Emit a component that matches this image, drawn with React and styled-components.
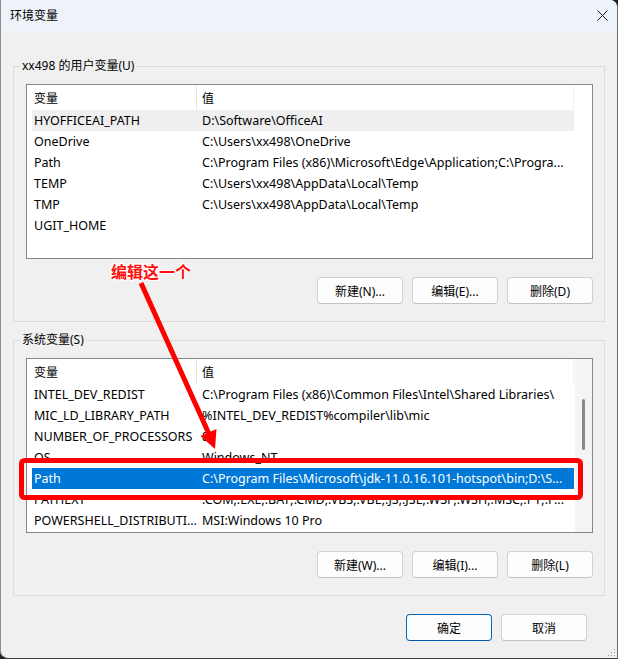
import React from "react";
import styled, { createGlobalStyle } from "styled-components";

const GlobalStyle = createGlobalStyle`
  html, body {
    margin: 0;
    padding: 0;
    background: #1d1f22;
  }
  body {
    font-family: "Noto Sans", "Noto Sans CJK SC", sans-serif;
  }
`;

const Window = styled.div`
  position: relative;
  width: 618px;
  height: 659px;
  box-sizing: border-box;
  display: flex;
  flex-direction: column;
  background: #f0f0f0;
  border-left: 1px solid #8d8d8d;
  border-right: 1px solid #6f6f6f;
  border-bottom: 1px solid #3c3c3c;
  border-radius: 0 8px 0 8px;
  overflow: hidden;
  font-size: 12px;
  color: #000;
`;

const TitleBar = styled.div`
  height: 31px;
  flex-shrink: 0;
  display: flex;
  align-items: center;
  justify-content: space-between;
  padding-left: 9px;
  background: #eef3fa;
`;

const Title = styled.span`
  font-size: 12px;
  line-height: 16px;
`;

const CloseButton = styled.div`
  width: 30px;
  height: 31px;
  display: flex;
  align-items: center;
  justify-content: center;
`;

const Content = styled.div`
  display: flex;
  flex-direction: column;
  gap: 18px;
  padding: 35px 12px 0 12px;
`;

const Group = styled.div`
  position: relative;
  border: 1px solid #dcdcdc;
  padding: 17px 11px 17px 12px;
`;

const Caption = styled.span`
  position: absolute;
  top: -9px;
  left: 6px;
  padding: 0 2px;
  line-height: 16px;
  background: #f0f0f0;
`;

const ListView = styled.div`
  height: 175px;
  box-sizing: border-box;
  border: 1px solid #828790;
  background: #fff;
  display: grid;
  grid-template-columns: 547px 1fr 17px;
  overflow: hidden;
`;

const Columns = styled.div`
  display: flex;
  flex-direction: column;
`;

const Header = styled.div`
  height: 25px;
  display: grid;
  grid-template-columns: 169px 378px;
  align-items: stretch;
  flex-shrink: 0;
`;

const HeaderCell = styled.div`
  display: flex;
  align-items: center;
  padding-left: ${(p) => (p.$value ? "5px" : "7px")};
  border-left: ${(p) => (p.$value ? "1px solid #e5e5e5" : "none")};
  border-right: ${(p) => (p.$value ? "1px solid #efefef" : "none")};
`;

const Row = styled.div`
  height: 21px;
  margin-left: 5px;
  display: grid;
  grid-template-columns: 164px 378px;
  align-items: center;
  flex-shrink: 0;
  background: ${(p) =>
    p.$selected ? "#0078d7" : p.$hover ? "#efefef" : "transparent"};
  color: ${(p) => (p.$selected ? "#fff" : "#000")};
`;

const Cell = styled.div`
  padding-left: ${(p) => (p.$value ? "6px" : "2px")};
  font-size: 12.5px;
  line-height: 21px;
  white-space: nowrap;
  overflow: hidden;
`;

const ScrollTrack = styled.div`
  grid-column: 3;
  background: #f4f4f4;
  padding: 40px 0 0 7px;
`;

const ScrollThumb = styled.div`
  width: 3px;
  height: 51px;
  border-radius: 2px;
  background: #8a8a8a;
`;

const ButtonRow = styled.div`
  display: flex;
  justify-content: flex-end;
  gap: 9px;
  margin-top: 18px;
`;

const Button = styled.button`
  width: 86px;
  height: 27px;
  box-sizing: border-box;
  padding: 0;
  border-radius: 4px;
  border: 1px solid ${(p) => (p.$primary ? "#0067c0" : "#d1d1d1")};
  border-bottom-color: ${(p) => (p.$primary ? "#0058a8" : "#c2c2c2")};
  background: #fdfdfd;
  font-family: inherit;
  font-size: 12px;
  color: #000;
`;

const Footer = styled.div`
  display: flex;
  justify-content: flex-end;
  gap: 9px;
  padding: 18px 30px 0 0;
`;

const Overlay = styled.svg`
  position: absolute;
  left: -1px;
  top: 0;
  pointer-events: none;
`;

const Label = styled.span`
  position: absolute;
  left: 110px;
  top: 262px;
  font-size: 16px;
  font-weight: 700;
  line-height: 20px;
  color: #ff1010;
  text-shadow: 1px 0 0 #fff, -1px 0 0 #fff, 0 1px 0 #fff, 0 -1px 0 #fff,
    1px 1px 0 #fff, -1px -1px 0 #fff, 1px -1px 0 #fff, -1px 1px 0 #fff;
`;

const Grip = styled.svg`
  position: absolute;
  right: 1px;
  bottom: 1px;
`;

const userVars = [
  ["HYOFFICEAI_PATH", "D:\\Software\\OfficeAI", "hover"],
  ["OneDrive", "C:\\Users\\xx498\\OneDrive"],
  ["Path", "C:\\Program Files (x86)\\Microsoft\\Edge\\Application;C:\\Progra..."],
  ["TEMP", "C:\\Users\\xx498\\AppData\\Local\\Temp"],
  ["TMP", "C:\\Users\\xx498\\AppData\\Local\\Temp"],
  ["UGIT_HOME", ""],
];

const systemVars = [
  ["INTEL_DEV_REDIST", "C:\\Program Files (x86)\\Common Files\\Intel\\Shared Libraries\\"],
  ["MIC_LD_LIBRARY_PATH", "%INTEL_DEV_REDIST%compiler\\lib\\mic"],
  ["NUMBER_OF_PROCESSORS", "8"],
  ["OS", "Windows_NT"],
  ["Path", "C:\\Program Files\\Microsoft\\jdk-11.0.16.101-hotspot\\bin;D:\\S...", "selected"],
  ["PATHEXT", ".COM;.EXE;.BAT;.CMD;.VBS;.VBE;.JS;.JSE;.WSF;.WSH;.MSC;.PY;.P..."],
  ["POWERSHELL_DISTRIBUTI...", "MSI:Windows 10 Pro"],
];

const VarList = ({ rows, scroll }) => (
  <ListView>
    <Columns>
      <Header>
        <HeaderCell>变量</HeaderCell>
        <HeaderCell $value>值</HeaderCell>
      </Header>
      {rows.map(([name, value, state]) => (
        <Row
          key={name + value}
          $selected={state === "selected"}
          $hover={state === "hover"}
        >
          <Cell>{name}</Cell>
          <Cell $value>{value}</Cell>
        </Row>
      ))}
    </Columns>
    {scroll && (
      <ScrollTrack>
        <ScrollThumb />
      </ScrollTrack>
    )}
  </ListView>
);

const VarGroup = ({ caption, rows, scroll, keys }) => (
  <Group>
    <Caption>{caption}</Caption>
    <VarList rows={rows} scroll={scroll} />
    <ButtonRow>
      <Button>新建({keys[0]})...</Button>
      <Button>编辑({keys[1]})...</Button>
      <Button>删除({keys[2]})</Button>
    </ButtonRow>
  </Group>
);

export default function App() {
  return (
    <>
      <GlobalStyle />
      <Window>
        <TitleBar>
          <Title>环境变量</Title>
          <CloseButton>
            <svg width="11" height="11" viewBox="0 0 11 11">
              <path d="M0.5 0.5 L10.5 10.5 M10.5 0.5 L0.5 10.5" stroke="#1a1a1a" strokeWidth="1" />
            </svg>
          </CloseButton>
        </TitleBar>
        <Content>
          <VarGroup caption="xx498 的用户变量(U)" rows={userVars} keys={["N", "E", "D"]} />
          <VarGroup caption="系统变量(S)" rows={systemVars} scroll keys={["W", "I", "L"]} />
        </Content>
        <Footer>
          <Button $primary>确定</Button>
          <Button>取消</Button>
        </Footer>

        <Overlay width="618" height="659" viewBox="0 0 618 659">
          <rect x="21.5" y="460.5" width="559" height="37" rx="3" fill="none" stroke="#ff0000" strokeWidth="5" />
          <line x1="141" y1="283" x2="209" y2="434" stroke="#ff0000" strokeWidth="5" />
          <polygon points="215,449 216.5,429 200.5,436" fill="#ff0000" />
        </Overlay>
        <Label>编辑这一个</Label>
        <Grip width="10" height="10" viewBox="0 0 10 10">
          <g fill="#9a9a9a">
            <rect x="8" y="2" width="1" height="1" />
            <rect x="5" y="5" width="1" height="1" />
            <rect x="8" y="5" width="1" height="1" />
            <rect x="2" y="8" width="1" height="1" />
            <rect x="5" y="8" width="1" height="1" />
            <rect x="8" y="8" width="1" height="1" />
          </g>
        </Grip>
      </Window>
    </>
  );
}
